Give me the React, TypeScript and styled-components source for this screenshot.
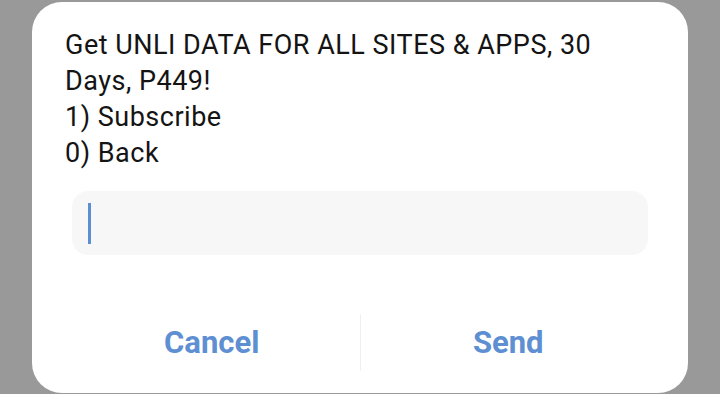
import styled, { createGlobalStyle } from 'styled-components';

const GlobalStyle = createGlobalStyle`
  html, body {
    margin: 0;
    padding: 0;
    background: #999999;
    height: 100%;
    overflow: hidden;
  }
`;

const Screen = styled.div`
  width: 720px;
  height: 394px;
  padding: 2px 32px 0;
  box-sizing: border-box;
  font-family: Roboto, 'Liberation Sans', sans-serif;
`;

const Dialog = styled.div`
  background: #ffffff;
  border-radius: 30px;
  height: 391px;
  display: flex;
  flex-direction: column;
`;

const Message = styled.div`
  padding: 25px 50px 0 33px;
  font-size: 27px;
  letter-spacing: 0.5px;
  line-height: 36px;
  color: #141414;
`;

const InputBox = styled.div`
  margin: 20px 40px 0;
  height: 64px;
  background: #f7f7f7;
  border-radius: 16px;
  display: flex;
  align-items: center;
  padding-left: 16px;
`;

const Caret = styled.span`
  width: 3px;
  height: 41px;
  background: #5b8fd2;
`;

const Actions = styled.div`
  margin-top: 59px;
  padding: 0 32px;
  height: 57px;
  display: grid;
  grid-template-columns: 1fr 1px 1fr;
  align-items: center;
`;

const Action = styled.button`
  border: none;
  background: none;
  font-family: Roboto, 'Liberation Sans', sans-serif;
  font-weight: 700;
  font-size: 31px;
  color: #5d8fd2;
  padding: 0;
  cursor: pointer;
`;

const Divider = styled.div`
  width: 1px;
  height: 57px;
  background: #f0f0f0;
`;

export default function App() {
  return (
    <>
      <GlobalStyle />
      <Screen>
        <Dialog>
          <Message>
            <div>Get UNLI DATA FOR ALL SITES &amp; APPS, 30 Days, P449!</div>
            <div>1) Subscribe</div>
            <div>0) Back</div>
          </Message>
          <InputBox>
            <Caret />
          </InputBox>
          <Actions>
            <Action>Cancel</Action>
            <Divider />
            <Action>Send</Action>
          </Actions>
        </Dialog>
      </Screen>
    </>
  );
}
